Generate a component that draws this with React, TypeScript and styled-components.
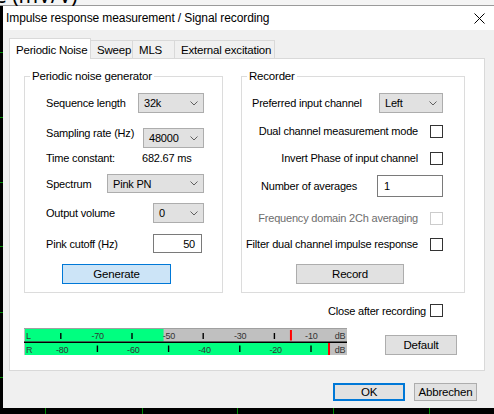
import React from "react";
import styled, { createGlobalStyle } from "styled-components";

const GlobalStyle = createGlobalStyle`
  html, body {
    margin: 0;
    padding: 0;
    background: #000;
  }
  body {
    font-family: "Liberation Sans", "Segoe UI", Arial, sans-serif;
  }
`;

const Screen = styled.div`
  position: relative;
  width: 494px;
  height: 414px;
  overflow: hidden;
  background: #000;
`;

const Backdrop = styled.svg`
  position: absolute;
  left: 0;
  top: 0;
`;

const Window = styled.div`
  position: absolute;
  left: 3px;
  top: 6px;
  width: 491px;
  height: 402px;
  background: #f0f0f0;
  display: flex;
  flex-direction: column;
  font-size: 11px;
  letter-spacing: -0.2px;
  color: #000;
`;

const TitleBar = styled.div`
  height: 24px;
  background: #fff;
  display: flex;
  align-items: center;
  padding-left: 3px;
`;

const Title = styled.div`
  flex: 1;
  font-size: 12px;
  letter-spacing: -0.1px;
  white-space: nowrap;
`;

const CloseButton = styled.div`
  width: 30px;
  height: 24px;
  display: flex;
  align-items: center;
  justify-content: center;
`;

const Body = styled.div`
  padding: 8px 0 0 6px;
  display: flex;
  flex-direction: column;
`;

const TabRow = styled.div`
  height: 20px;
  display: flex;
  align-items: flex-end;
`;

const Tab = styled.div<{ $active?: boolean; $w: number }>`
  box-sizing: border-box;
  width: ${(p) => p.$w}px;
  height: ${(p) => (p.$active ? 21 : 18)}px;
  margin-bottom: ${(p) => (p.$active ? -1 : 0)}px;
  margin-left: ${(p) => (p.$active ? 0 : -1)}px;
  position: relative;
  z-index: ${(p) => (p.$active ? 1 : 0)};
  background: ${(p) => (p.$active ? "#fff" : "#f0f0f0")};
  border: 1px solid #d9d9d9;
  border-bottom: none;
  padding: 1px 0 0 6px;
  display: flex;
  align-items: center;
  white-space: nowrap;
  font-size: 11.5px;
`;

const Panel = styled.div`
  box-sizing: border-box;
  width: 476px;
  height: 313px;
  background: #fff;
  border: 1px solid #d9d9d9;
  padding: 9px 0 0 14px;
  display: flex;
  flex-direction: column;
`;

const Groups = styled.div`
  display: flex;
  gap: 18px;
`;

const Group = styled.fieldset<{ $w: number }>`
  box-sizing: border-box;
  width: ${(p) => p.$w}px;
  height: 225px;
  margin: 0;
  padding: 0;
  border: 1px solid #dcdcdc;
  min-width: 0;
`;

const GroupBody = styled.div<{ $pl: number; $pr: number }>`
  display: flex;
  flex-direction: column;
  padding: 0 ${(p) => p.$pr}px 0 ${(p) => p.$pl}px;
`;

const Legend = styled.legend`
  padding: 0 2px;
  margin-left: 5px;
  line-height: 16px;
  font-size: 11.5px;
`;

const Row = styled.div<{ $mt: number; $h?: number; $pl?: number; $end?: boolean }>`
  display: flex;
  align-items: center;
  height: ${(p) => p.$h ?? 20}px;
  margin-top: ${(p) => p.$mt}px;
  padding-left: ${(p) => p.$pl ?? 0}px;
  justify-content: ${(p) => (p.$end ? "flex-end" : "flex-start")};
  white-space: nowrap;
`;

const Label = styled.span<{ $w?: number; $muted?: boolean; $raise?: number }>`
  width: ${(p) => (p.$w ? `${p.$w}px` : "auto")};
  color: ${(p) => (p.$muted ? "#6d6d6d" : "#000")};
  margin-bottom: ${(p) => p.$raise ?? 0}px;
`;

const CheckLabel = styled(Label)`
  margin-right: 12px;
`;

const SelectBox = styled.div<{ $w: number; $h?: number }>`
  box-sizing: border-box;
  margin-left: auto;
  width: ${(p) => p.$w}px;
  height: ${(p) => p.$h ?? 20}px;
  background: #e1e1e1;
  border: 1px solid #adadad;
  display: flex;
  align-items: center;
  justify-content: space-between;
  padding: 0 5px 0 5px;
`;

const Input = styled.div<{ $w: number; $h: number; $right?: boolean }>`
  box-sizing: border-box;
  margin-left: auto;
  width: ${(p) => p.$w}px;
  height: ${(p) => p.$h}px;
  background: #fff;
  border: 1px solid #7a7a7a;
  display: flex;
  align-items: center;
  justify-content: ${(p) => (p.$right ? "flex-end" : "flex-start")};
  padding: 0 6px;
`;

const Check = styled.div<{ $disabled?: boolean }>`
  box-sizing: border-box;
  width: 13px;
  height: 13px;
  flex: none;
  background: #fff;
  border: 1px solid ${(p) => (p.$disabled ? "#cccccc" : "#333")};
`;

const Button = styled.div<{ $w: number; $h?: number; $ml?: number; $variant?: "hot" | "default" }>`
  box-sizing: border-box;
  width: ${(p) => p.$w}px;
  height: ${(p) => p.$h ?? 20}px;
  margin-left: ${(p) => p.$ml ?? 0}px;
  display: flex;
  align-items: center;
  justify-content: center;
  background: ${(p) => (p.$variant === "hot" ? "#cce4f7" : "#e1e1e1")};
  border: ${(p) =>
    p.$variant === "hot"
      ? "1px solid #0078d7"
      : p.$variant === "default"
      ? "2px solid #0078d7"
      : "1px solid #adadad"};
  font-size: 11.5px;
`;

const CloseRow = styled.div`
  display: flex;
  justify-content: flex-end;
  align-items: center;
  height: 13px;
  margin-top: 11px;
  padding-right: 41px;
  white-space: nowrap;
`;

const CloseLabel = styled.span`
  margin-right: 4px;
`;

const MeterRow = styled.div`
  display: flex;
  align-items: flex-end;
  margin-top: 11px;
  gap: 38px;
`;

const Footer = styled.div`
  display: flex;
  justify-content: flex-end;
  gap: 9px;
  padding: 12px 17px 0 0;
`;

const Chevron = () => (
  <svg width="8" height="5" viewBox="0 0 8 5">
    <path d="M0.5 0.5 L4 4 L7.5 0.5" stroke="#606060" strokeWidth="1" fill="none" />
  </svg>
);

const Select: React.FC<{ w: number; h?: number; value: string }> = ({ w, h, value }) => (
  <SelectBox $w={w} $h={h}>
    <span>{value}</span>
    <Chevron />
  </SelectBox>
);

const dbX = (db: number) => 2.5 + (db + 90) * 3.56;

const LevelMeter: React.FC<{ left: number; leftPeak: number; right: number; rightPeak: number }> = ({
  left,
  leftPeak,
  right,
  rightPeak,
}) => {
  const lLabels = [-70, -50, -30, -10];
  const lTicks = [-80, -60, -40, -20];
  const rLabels = [-80, -60, -40, -20];
  const rTicks = [-70, -50, -30, -10];
  const txt = { fontFamily: "Liberation Sans, Arial, sans-serif", fontSize: 9, fill: "#333" };
  return (
    <svg width="323" height="27" viewBox="0 0 323 27">
      <rect x="0" y="0" width="323" height="27" fill="#c0c0c0" />
      <rect x="0" y="0" width="323" height="1" fill="#a0a0a0" />
      <rect x="1" y="1" width={dbX(left) - 1} height="12.5" fill="#00ff80" />
      <rect x="1" y="15" width={dbX(right) - 1} height="12" fill="#00ff80" />
      <rect x="0" y="13.5" width="323" height="1.5" fill="#000" />
      {lTicks.map((d) => (
        <rect key={d} x={dbX(d) - 2} y="5" width="1.4" height="6" fill="#000" />
      ))}
      {rTicks.map((d) => (
        <rect key={d} x={dbX(d) - 1} y="17.5" width="1.4" height="6.5" fill="#000" />
      ))}
      <rect x={dbX(leftPeak)} y="2" width="2" height="10.5" fill="#f00" />
      <rect x={dbX(rightPeak)} y="15" width="2" height="12" fill="#f00" />
      <text x="2" y="11" {...txt}>L</text>
      <text x="2" y="24.5" {...txt}>R</text>
      {lLabels.map((d) => (
        <text key={d} x={dbX(d)} y="11" textAnchor="middle" {...txt}>
          {d}
        </text>
      ))}
      {rLabels.map((d) => (
        <text key={d} x={dbX(d)} y="24.5" textAnchor="middle" {...txt}>
          {d}
        </text>
      ))}
      <text x="316" y="11" textAnchor="middle" {...txt}>dB</text>
      <text x="316" y="24.5" textAnchor="middle" {...txt}>dB</text>
    </svg>
  );
};

const gridX = [45, 142, 237, 333, 429];
const gridY = [52, 117, 182, 246, 312, 377];

export default function App() {
  return (
    <>
      <GlobalStyle />
      <Screen>
        <Backdrop width="494" height="414" viewBox="0 0 494 414">
          <rect x="0" y="0" width="494" height="414" fill="#000" />
          {gridX.map((x) => (
            <rect key={x} x={x} y="0" width="1" height="414" fill="#008a00" />
          ))}
          {gridY.map((y) => (
            <rect key={y} x="0" y={y} width="494" height="1" fill="#008a00" />
          ))}
          <rect x="0" y="0" width="494" height="5" fill="#f4f4f4" />
          <rect x="0" y="5" width="494" height="1" fill="#9a9a9a" />
          <text x="-5" y="3" fontFamily="Noto Sans, sans-serif" fontSize="21" fill="#000">
            e (mV/V)
          </text>
        </Backdrop>
        <Window>
          <TitleBar>
            <Title>Impulse response measurement / Signal recording</Title>
            <CloseButton>
              <svg width="11" height="11" viewBox="0 0 11 11">
                <path d="M0.5 0.5 L10.5 10.5 M10.5 0.5 L0.5 10.5" stroke="#000" strokeWidth="1" />
              </svg>
            </CloseButton>
          </TitleBar>
          <Body>
            <TabRow>
              <Tab $active $w={82}>Periodic Noise</Tab>
              <Tab $w={43}>Sweep</Tab>
              <Tab $w={43}>MLS</Tab>
              <Tab $w={101}>External excitation</Tab>
            </TabRow>
            <Panel>
              <Groups>
                <Group $w={199}>
                  <Legend>Periodic noise generator</Legend>
                  <GroupBody $pl={21} $pr={18}>
                    <Row $mt={9}>
                      <Label>Sequence length</Label>
                      <Select w={66} value="32k" />
                    </Row>
                    <Row $mt={15}>
                      <Label $raise={10}>Sampling rate (Hz)</Label>
                      <Select w={61} value="48000" />
                    </Row>
                    <Row $mt={0}>
                      <Label $w={96}>Time constant:</Label>
                      <span>682.67 ms</span>
                    </Row>
                    <Row $mt={6} $h={19}>
                      <Label>Spectrum</Label>
                      <Select w={97} h={19} value="Pink PN" />
                    </Row>
                    <Row $mt={10}>
                      <Label>Output volume</Label>
                      <Select w={51} value="0" />
                    </Row>
                    <Row $mt={11} $h={19}>
                      <Label>Pink cutoff (Hz)</Label>
                      <Input $w={49} $h={19} $right style={{ marginRight: 2 }}>
                        50
                      </Input>
                    </Row>
                    <Row $mt={11}>
                      <Button $w={109} $ml={16} $variant="hot">
                        Generate
                      </Button>
                    </Row>
                  </GroupBody>
                </Group>
                <Group $w={224}>
                  <Legend>Recorder</Legend>
                  <GroupBody $pl={0} $pr={21}>
                    <Row $mt={9} $pl={10}>
                      <Label>Preferred input channel</Label>
                      <Select w={64} value="Left" />
                    </Row>
                    <Row $mt={8} $end>
                      <CheckLabel>Dual channel measurement mode</CheckLabel>
                      <Check />
                    </Row>
                    <Row $mt={7} $end>
                      <CheckLabel>Invert Phase of input channel</CheckLabel>
                      <Check />
                    </Row>
                    <Row $mt={7} $h={22} $pl={19}>
                      <Label>Number of averages</Label>
                      <Input $w={66} $h={22}>
                        1
                      </Input>
                    </Row>
                    <Row $mt={11} $end>
                      <CheckLabel $muted>Frequency domain 2Ch averaging</CheckLabel>
                      <Check $disabled />
                    </Row>
                    <Row $mt={6} $end>
                      <CheckLabel>Filter dual channel impulse response</CheckLabel>
                      <Check />
                    </Row>
                    <Row $mt={10}>
                      <Button $w={108} $ml={54}>
                        Record
                      </Button>
                    </Row>
                  </GroupBody>
                </Group>
              </Groups>
              <CloseRow>
                <CloseLabel>Close after recording</CloseLabel>
                <Check />
              </CloseRow>
              <MeterRow>
                <LevelMeter left={-51.5} leftPeak={-16} right={-5.3} rightPeak={-5.3} />
                <Button $w={72}>Default</Button>
              </MeterRow>
            </Panel>
            <Footer>
              <Button $w={72} $h={18} $variant="default">
                OK
              </Button>
              <Button $w={63} $h={18}>
                Abbrechen
              </Button>
            </Footer>
          </Body>
        </Window>
      </Screen>
    </>
  );
}
